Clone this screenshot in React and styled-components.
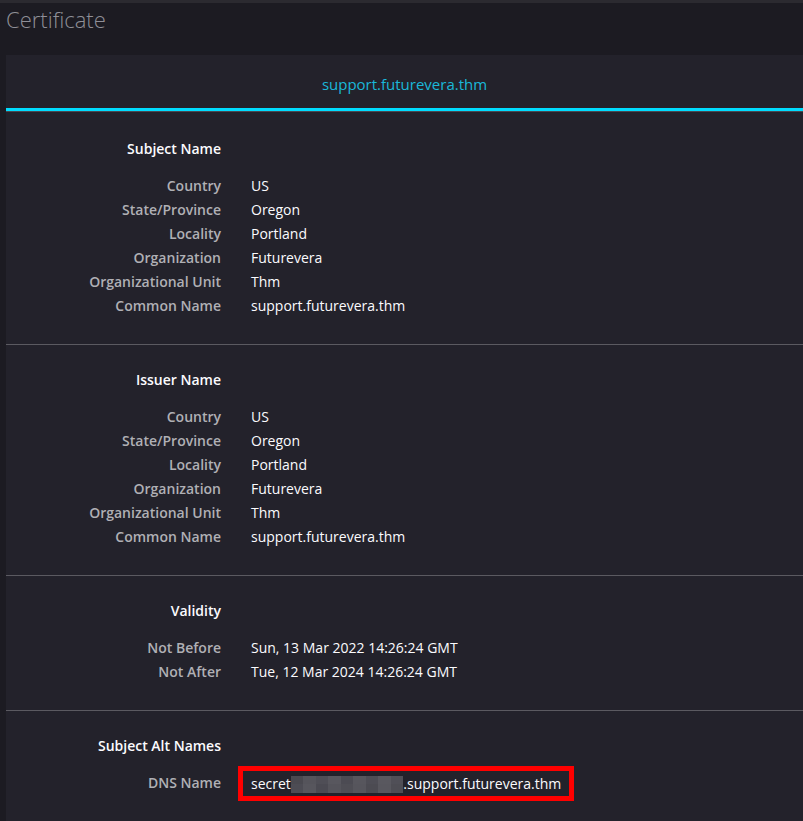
import React from 'react';
import styled, { createGlobalStyle } from 'styled-components';

const GlobalStyle = createGlobalStyle`
  html, body {
    margin: 0;
    padding: 0;
    background: #1c1b22;
  }
  body {
    font-family: 'Open Sans', 'Noto Sans', sans-serif;
    color: #fbfbfe;
  }
`;

const Page = styled.div`
  border-top: 3px solid #2b2a30;
  padding: 0 0 0 6px;
  min-height: 818px;
  overflow: hidden;
`;

const Title = styled.h1`
  margin: 0;
  padding: 0;
  height: 52px;
  font-size: 22px;
  font-weight: 300;
  color: #8f8f97;
  line-height: 32px;
`;

const Card = styled.div`
  background: #23222b;
`;

const TabBar = styled.div`
  height: 56px;
  box-sizing: border-box;
  padding-top: 4px;
  display: flex;
  align-items: center;
  justify-content: center;
  border-bottom: 3px solid #00ddff;
  font-size: 15px;
  color: #1ab8d9;
`;

const TabGap = styled.div`
  height: 1px;
  background: #4a4950;
`;

const Section = styled.section`
  padding: 23px 0 26px;
  border-top: ${(p) => (p.$first ? 'none' : '1px solid #5b5a61')};
  padding-top: ${(p) => (p.$first ? '25px' : '23px')};
`;

const Grid = styled.div`
  display: grid;
  grid-template-columns: 215px auto;
  column-gap: 30px;
  align-items: center;
  font-size: 14px;
  line-height: 24px;
`;

const Heading = styled.div`
  grid-column: 1;
  text-align: right;
  font-weight: 600;
  color: #fbfbfe;
  margin-bottom: 13px;
`;

const Label = styled.div`
  text-align: right;
  font-weight: 600;
  color: #b0b0b5;
  white-space: nowrap;
`;

const Value = styled.div`
  color: #fbfbfe;
  white-space: nowrap;
`;

const Highlight = styled.div`
  justify-self: start;
  margin: -5px 0 -6px -13px;
  border: 5px solid #ff0000;
  padding: 0 8px;
  height: 25px;
  display: flex;
  align-items: center;
  color: #fbfbfe;
  white-space: nowrap;
`;

const Pixelated = styled.span`
  display: inline-grid;
  grid-template-columns: repeat(9, 12.5px);
  grid-template-rows: 8px 9px;
  vertical-align: middle;
  margin-top: 1px;
`;

const Cell = styled.span`
  background: ${(p) => p.$c};
`;

const pixels = [
  '#4a4950', '#55545b', '#4f4e56', '#58575e', '#4c4b53', '#57565d', '#4e4d55', '#59585f', '#504f57',
  '#4d4c54', '#57565d', '#4b4a52', '#55545b', '#4f4e55', '#56555c', '#4c4b52', '#58575e', '#4e4d54',
];

const sections = [
  {
    title: 'Subject Name',
    rows: [
      ['Country', 'US'],
      ['State/Province', 'Oregon'],
      ['Locality', 'Portland'],
      ['Organization', 'Futurevera'],
      ['Organizational Unit', 'Thm'],
      ['Common Name', 'support.futurevera.thm'],
    ],
  },
  {
    title: 'Issuer Name',
    rows: [
      ['Country', 'US'],
      ['State/Province', 'Oregon'],
      ['Locality', 'Portland'],
      ['Organization', 'Futurevera'],
      ['Organizational Unit', 'Thm'],
      ['Common Name', 'support.futurevera.thm'],
    ],
  },
  {
    title: 'Validity',
    rows: [
      ['Not Before', 'Sun, 13 Mar 2022 14:26:24 GMT'],
      ['Not After', 'Tue, 12 Mar 2024 14:26:24 GMT'],
    ],
  },
];

export default function App() {
  return (
    <>
      <GlobalStyle />
      <Page>
        <Title>Certificate</Title>
        <Card>
          <TabBar>support.futurevera.thm</TabBar>
          <TabGap />
          {sections.map((s, i) => (
            <Section key={s.title} $first={i === 0}>
              <Grid>
                <Heading>{s.title}</Heading>
                <div />
                {s.rows.map(([label, value]) => (
                  <React.Fragment key={label}>
                    <Label>{label}</Label>
                    <Value>{value}</Value>
                  </React.Fragment>
                ))}
              </Grid>
            </Section>
          ))}
          <Section>
            <Grid>
              <Heading>Subject Alt Names</Heading>
              <div />
              <Label>DNS Name</Label>
              <Highlight>
                secret
                <Pixelated>
                  {pixels.map((c, i) => (
                    <Cell key={i} $c={c} />
                  ))}
                </Pixelated>
                .support.futurevera.thm
              </Highlight>
            </Grid>
          </Section>
        </Card>
      </Page>
    </>
  );
}
